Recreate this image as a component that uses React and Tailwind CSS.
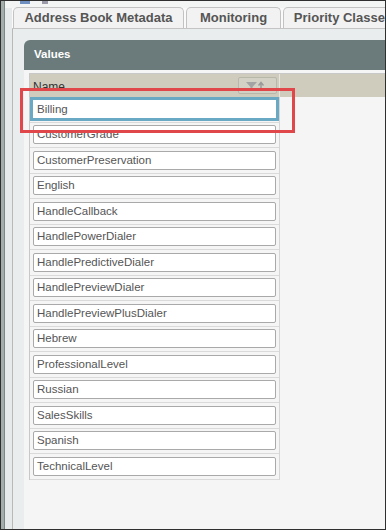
const values = [
  "Billing",
  "CustomerGrade",
  "CustomerPreservation",
  "English",
  "HandleCallback",
  "HandlePowerDialer",
  "HandlePredictiveDialer",
  "HandlePreviewDialer",
  "HandlePreviewPlusDialer",
  "Hebrew",
  "ProfessionalLevel",
  "Russian",
  "SalesSkills",
  "Spanish",
  "TechnicalLevel",
];

const tabs = [
  { label: "Address Book Metadata", width: "w-[171px]" },
  { label: "Monitoring", width: "w-[95px]" },
  { label: "Priority Classes", width: "w-[120px]" },
];

function FilterButton() {
  return (
    <div className="absolute right-[2px] top-[3px] flex h-[17px] w-[39px] items-center justify-center gap-[1px] rounded-[2px] border border-[#b9b7aa] bg-[#d3d1c5]">
      <svg width="26" height="12" viewBox="0 0 26 12">
        <path d="M1 2 H12 L7.5 7 V11 L5.5 10 V7 Z" fill="#a3a3a3" />
        <path d="M16 11 V3 M13.5 5.5 L16 2.5 L18.5 5.5" stroke="#9a9a9a" strokeWidth="1.5" fill="none" />
        <rect x="23" y="9" width="2" height="2" fill="#222" />
      </svg>
    </div>
  );
}

export default function App() {
  return (
    <div
      className="relative flex h-[530px] w-[386px] overflow-hidden border border-[#2f2f2f] bg-[#fafafa]"
      style={{ fontFamily: '"Liberation Sans", Arial, sans-serif' }}
    >
      <div className="w-[3px] shrink-0 bg-[#a3adab]" />
      <div className="w-[1px] shrink-0 bg-[#7d8785]" />
      <div className="flex min-w-0 flex-1 flex-col">
        <div className="flex h-[7px] shrink-0 items-start gap-[12px] bg-[#f3f4f4] pl-[15px]">
          <div className="h-[3px] w-[10px] bg-[#6f8fc0]" />
          <div className="h-[3px] w-[6px] bg-[#9a9aa8]" />
        </div>
        <div className="flex min-h-0 flex-1">
          <div className="w-[7px] shrink-0 bg-[#e6eaea]" />
          <div className="flex min-w-0 flex-1 flex-col">
            <div className="flex h-[21px] shrink-0 items-end gap-[2px] border-b border-[#c4c4c4] bg-[#fafafa] pl-[1px]">
              {tabs.map((t) => (
                <div
                  key={t.label}
                  className={`flex h-[21px] ${t.width} shrink-0 items-center justify-center whitespace-nowrap rounded-t-[5px] border border-b-0 border-[#c2c2c2] bg-[#f2f2f2] text-[13px] font-bold text-[#555]`}
                >
                  {t.label}
                </div>
              ))}
            </div>
            <div className="flex min-h-0 flex-1 flex-col border-l border-[#b8b8b8] bg-[#e9eded] pl-[11px] pt-[11px]">
              <div className="flex h-[30px] shrink-0 items-center rounded-tl-[6px] bg-[#6b7b7b] pl-[10px] text-[11.5px] font-bold text-white">
                Values
              </div>
              <div className="flex min-h-0 flex-1 flex-col bg-[#f5f5f5] pl-[5px] pt-[3px]">
                <div className="border-l border-t border-[#c8c8c8]">
                  <div className="flex h-[23px] bg-[#cfccbe]">
                    <div className="relative w-[250px] shrink-0 border-r border-[#e6e5de] pl-[3px] pt-[4px] text-[12px] text-[#333]">
                      Name
                      <FilterButton />
                    </div>
                  </div>
                  <div className="w-[250px] border-r border-[#d6d6d6]">
                    {values.map((v, i) =>
                      i === 0 ? (
                        <div key={v} className="flex h-[25.5px] items-center border-b border-[#dadada]">
                          <div className="flex h-[24px] w-full items-center border-[3px] border-[#6aa9c4] bg-white pl-[4px] text-[11.5px] text-[#555]">
                            {v}
                          </div>
                        </div>
                      ) : (
                        <div key={v} className="flex h-[25.5px] items-center border-b border-[#dadada] px-[3px]">
                          <div className="flex h-[19px] w-full items-center rounded-[2px] border border-[#a9a9a9] bg-white pl-[3px] text-[11.5px] text-[#555]">
                            {v}
                          </div>
                        </div>
                      )
                    )}
                  </div>
                </div>
              </div>
            </div>
          </div>
        </div>
      </div>
      <div className="absolute left-[19px] top-[87px] h-[45px] w-[275px] border-[3px] border-[#e0474a]" />
    </div>
  );
}
